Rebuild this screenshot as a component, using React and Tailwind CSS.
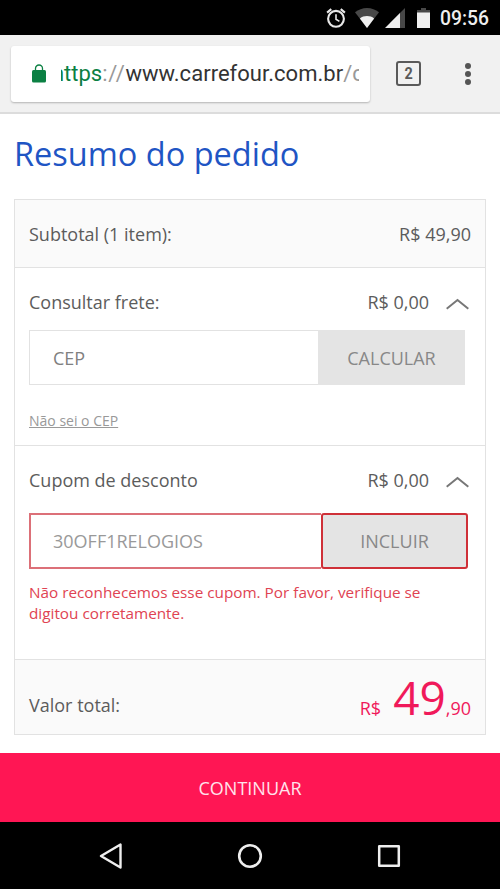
import { useState } from 'react';

function StatusBar() {
  return (
    <div className="h-[35px] bg-black flex items-center justify-end pr-[11px] text-[#eee]">
      <svg className="w-5 h-5 mr-[9px]" viewBox="0 0 20 20" fill="none" stroke="#e8e8e8" strokeWidth="2.1">
        <circle cx="10" cy="10.8" r="7.9" />
        <path d="M10 6.3v5l3.4 2.1" strokeWidth="1.6" />
        <path d="M1.1 4.6 5.3 1.1M18.9 4.6 14.7 1.1" />
      </svg>
      <svg className="w-6 h-5 mr-[6px]" viewBox="0 0 24 20">
        <path d="M0 4.3C3.4 1.6 7.5 0 12 0s8.6 1.6 12 4.3L12 20z" fill="#484848" />
        <path d="M4.9 10.4C6.9 8.8 9.3 8 12 8s5.1.8 7.1 2.4L12 20z" fill="#f0f0f0" />
      </svg>
      <svg className="w-5 h-5 mr-3" viewBox="0 0 20 20">
        <path d="M5 15 20 0v20H15z" fill="#484848" />
        <path d="M0 20 15 5v15z" fill="#eee" />
      </svg>
      <svg className="w-[13px] h-5 mr-[10px]" viewBox="0 0 13 20">
        <path d="M4 0h5v2h4v3H0V2h4z" fill="#484848" />
        <path d="M0 4.5h13V20H0z" fill="#f0f0f0" />
      </svg>
      <span className="font-[Roboto,sans-serif] text-[19.3px] leading-5 font-medium pt-[3px]">09:56</span>
    </div>
  );
}

function BrowserBar() {
  return (
    <div className="h-[79px] bg-[#f1f1f1] border-b-2 border-[#dcdcdc] flex items-center pl-[11px]">
      <div className="w-[359px] h-[56px] bg-white rounded-[3px] shadow-[0_1px_2px_rgba(0,0,0,0.25)] flex items-center pl-[21px]">
        <svg className="w-[14px] h-[19px] mr-[15px]" viewBox="0 0 14 19">
          <path d="M3.5 8V4.5a3.5 3.5 0 0 1 7 0V8" fill="none" stroke="#0b8043" strokeWidth="1.3" />
          <rect y="6" width="14" height="12.5" rx="1.5" fill="#0b8043" />
        </svg>
        <div className="w-[298px] overflow-hidden whitespace-nowrap font-[Roboto,sans-serif] text-[22px] leading-8 text-[#333]">
          <span className="inline-block ml-[-9px]">
            <span className="text-[#0b8043]">https</span>
            <span className="text-[#999] tracking-[0.7px]">://</span>
            <span className="tracking-[0.03px]">www.carrefour.com.br</span>
            <span className="text-[#999]">/c</span>
          </span>
        </div>
      </div>
      <div className="ml-[26px] w-[25px] h-[25px] border-[2.5px] border-[#5a5a5a] rounded-[3px] flex items-center justify-center font-[Roboto,sans-serif] font-bold text-[16px] leading-none text-[#5a5a5a]">
        <span className="scale-x-90 pt-px">2</span>
      </div>
      <div className="ml-[44px] flex flex-col gap-[2px]">
        <span className="w-[6px] h-[6px] rounded-full bg-[#555]" />
        <span className="w-[6px] h-[6px] rounded-full bg-[#555]" />
        <span className="w-[6px] h-[6px] rounded-full bg-[#555]" />
      </div>
    </div>
  );
}

function PriceRow({ label, price }) {
  return (
    <div className="flex items-center h-6">
      <span>{label}</span>
      <span className="ml-auto mr-[17px]">{price}</span>
      <svg className="w-[23px] h-3 mr-[2px] mt-1" viewBox="0 0 23 12" fill="none" stroke="#777" strokeWidth="2">
        <path d="M.7 10.7 11.5 2 22.3 10.7" />
      </svg>
    </div>
  );
}

function NavBar() {
  return (
    <div className="h-[67px] bg-black flex items-center justify-between px-[99px]">
      <svg className="w-6 h-[26px]" viewBox="0 0 24 26" fill="none" stroke="#eee" strokeWidth="2.4" strokeLinejoin="round">
        <path d="M21.5 1.5v23L2 13z" />
      </svg>
      <svg className="w-[26px] h-[26px]" viewBox="0 0 26 26" fill="none" stroke="#eee" strokeWidth="2.6">
        <circle cx="13" cy="13" r="10.8" />
      </svg>
      <svg className="w-6 h-6" viewBox="0 0 24 24" fill="none" stroke="#eee" strokeWidth="2.5" strokeLinejoin="round">
        <rect x="2.2" y="2.2" width="19.6" height="19.6" />
      </svg>
    </div>
  );
}

export default function App() {
  const [cep, setCep] = useState('');
  const [coupon, setCoupon] = useState('30OFF1RELOGIOS');

  return (
    <div className="w-[500px] h-[889px] bg-white flex flex-col overflow-hidden font-['Open_Sans',sans-serif] text-[18px] text-[#5c5c5c]">
      <StatusBar />
      <BrowserBar />

      <main className="flex-1 px-[14px]">
        <h1 className="h-[85px] pt-[17px] text-[32.5px] leading-[46px] text-[#1f55c4] whitespace-nowrap">Resumo do pedido</h1>

        <div className="border border-[#e2e2e2] whitespace-nowrap">
          <div className="h-[67px] bg-[#fafafa] px-[14px] pt-[2px] flex items-center justify-between">
            <span>Subtotal (1 item):</span>
            <span>R$ 49,90</span>
          </div>

          <div className="h-[178px] border-t border-[#e2e2e2] px-[14px] pt-[22px]">
            <PriceRow label="Consultar frete:" price="R$ 0,00" />
            <div className="flex w-[436px] h-[55px] mt-[16px]">
              <input value={cep} onChange={e => setCep(e.target.value)} placeholder="CEP"
                className="w-[289px] border border-r-0 border-[#e2e2e2] px-[23px] pt-[2px] placeholder:text-[#808080] focus:outline-none" />
              <button className="flex-1 pt-[2px] bg-[#e4e4e4] text-[#888]">CALCULAR</button>
            </div>
            <a className="block mt-[26px] text-[14px] leading-5 text-[#999] underline">Não sei o CEP</a>
          </div>

          <div className="h-[214px] border-t border-[#e2e2e2] px-[14px] pt-[22px]">
            <PriceRow label="Cupom de desconto" price="R$ 0,00" />
            <div className="flex w-[439px] h-[56px] mt-[21px]">
              <input value={coupon} onChange={e => setCoupon(e.target.value)}
                className="w-[292px] border-2 border-r-0 border-[#dc7078] px-[22px] text-[#999] focus:outline-none" />
              <button className="flex-1 border-2 border-[#cf3038] rounded-[3px] bg-[#e4e4e4] text-[#888]">INCLUIR</button>
            </div>
            <p className="mt-[13px] text-[15.3px] leading-[21px] text-[#e04352]">
              Não reconhecemos esse cupom. Por favor, verifique se<br />
              digitou corretamente.
            </p>
          </div>

          <div className="h-[75px] border-t border-[#e2e2e2] bg-[#fafafa] px-[14px] flex items-start justify-between">
            <span className="pt-[32px]">Valor total:</span>
            <span className="text-[#f0195a] leading-[74px]">
              R$<span className="text-[46px] leading-[74px] ml-[12px]">49</span>,90
            </span>
          </div>
        </div>
      </main>

      <button className="h-[69px] pt-[2px] bg-[#ff1654] text-[#ffe4ec]">CONTINUAR</button>
      <NavBar />
    </div>
  );
}
